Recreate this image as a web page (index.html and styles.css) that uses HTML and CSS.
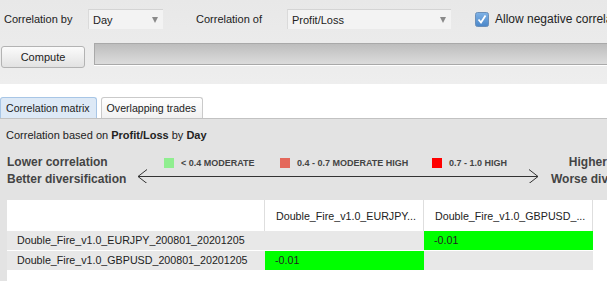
FILE: index.html
```html
<!DOCTYPE html>
<html>

<head>
    <link rel="stylesheet" href="styles.css">
</head>

<body>
    <div class="toolbar">
        <div class="options">
            <label class="opt-label by-label">Correlation by</label>
            <div class="select select-by"><span>Day</span><span class="caret"></span></div>
            <label class="opt-label of-label">Correlation of</label>
            <div class="select select-of"><span>Profit/Loss</span><span class="caret"></span></div>
            <svg class="check" width="14" height="15" viewBox="0 0 14 15">
                <defs>
                    <linearGradient id="chk" x1="0" y1="0" x2="0" y2="1">
                        <stop offset="0" stop-color="#7fb2e6" />
                        <stop offset="1" stop-color="#4a86c8" />
                    </linearGradient>
                </defs>
                <rect x="0.5" y="0.5" width="13" height="14" rx="2" fill="url(#chk)" stroke="#6b8fb8" />
                <path d="M3.5 7.5 L6 10.5 L10.5 3.5" fill="none" stroke="#fff" stroke-width="1.8" />
            </svg>
            <span class="check-label">Allow negative correlation</span>
        </div>
        <div class="actions">
            <button class="compute">Compute</button>
            <div class="progress"></div>
        </div>
    </div>

    <div class="tabs">
        <div class="tab active">Correlation matrix</div>
        <div class="tab">Overlapping trades</div>
    </div>

    <div class="panel">
        <div class="summary">Correlation based on <b>Profit/Loss</b> by <b>Day</b></div>

        <div class="legend">
            <div class="legend-side legend-left">Lower correlation<br>Better diversification</div>
            <div class="legend-mid">
                <div class="legend-keys">
                    <div class="key key-low"><span class="swatch green"></span>&lt; 0.4 MODERATE</div>
                    <div class="key key-mid"><span class="swatch salmon"></span>0.4 - 0.7 MODERATE HIGH</div>
                    <div class="key"><span class="swatch red"></span>0.7 - 1.0 HIGH</div>
                </div>
                <svg class="arrow" width="402" height="14" viewBox="0 0 402 14">
                    <path d="M1 7.5 H401 M10 0.5 L1 7.5 L10 14.5 M392 0.5 L401 7.5 L392 14.5" fill="none"
                        stroke="#333" stroke-width="1" />
                </svg>
            </div>
            <div class="legend-side legend-right">Higher correlation<br>Worse diversification</div>
        </div>

        <div class="matrix">
            <div class="grid">
                <div class="head"></div>
                <div class="head">Double_Fire_v1.0_EURJPY...</div>
                <div class="head">Double_Fire_v1.0_GBPUSD_...</div>

                <div class="cell label">Double_Fire_v1.0_EURJPY_200801_20201205</div>
                <div class="cell"></div>
                <div class="cell hit">-0.01</div>

                <div class="cell label">Double_Fire_v1.0_GBPUSD_200801_20201205</div>
                <div class="cell hit">-0.01</div>
                <div class="cell"></div>
            </div>
        </div>
    </div>
</body>

</html>
```

FILE: styles.css
```css
html,
body {
    margin: 0;
    overflow: hidden;
}

body {
    font-family: "Liberation Sans", Arial, sans-serif;
    font-size: 11px;
    color: #222;
    background: #fff;
    height: 281px;
}

.toolbar {
    height: 84px;
    box-sizing: border-box;
    padding-top: 9px;
    background: linear-gradient(#e8e8e8, #eeeeee);
}

.options {
    display: flex;
    align-items: center;
    height: 20px;
    white-space: nowrap;
}

.opt-label {
    flex: none;
}

.by-label {
    margin-left: 4px;
    width: 84px;
}

.of-label {
    margin-left: 33px;
    width: 91px;
}

.select {
    flex: none;
    box-sizing: border-box;
    height: 20px;
    display: flex;
    align-items: center;
    justify-content: space-between;
    padding: 0 5px 0 4px;
    background: #f3f3f3;
    border-top: 1px solid #d4d4d4;
    border-left: 1px solid #dadada;
}

.select-by {
    width: 75px;
}

.select-of {
    width: 164px;
}

.caret {
    width: 0;
    height: 0;
    border-left: 3px solid transparent;
    border-right: 3px solid transparent;
    border-top: 6px solid #8a8a8a;
}

.check {
    flex: none;
    margin-left: 24px;
}

.check-label {
    margin-left: 6px;
    font-size: 12px;
}

.actions {
    display: flex;
    align-items: flex-start;
    margin-top: 14px;
}

.compute {
    flex: none;
    margin: 3px 0 0 1px;
    width: 84px;
    height: 22px;
    border: 1px solid #b3b3b3;
    border-radius: 3px;
    background: linear-gradient(#fbfbfb, #e2e2e2);
    font-family: "Liberation Sans", Arial, sans-serif;
    font-size: 11px;
    color: #222;
    padding: 0;
}

.progress {
    flex: none;
    margin-left: 9px;
    width: 540px;
    height: 22px;
    box-sizing: border-box;
    border: 1px solid #a9a9a9;
    background: linear-gradient(#bdbdbd, #dcdcdc);
    box-shadow: 0 1px 0 #fff;
}

.tabs {
    display: flex;
    gap: 4px;
    padding-top: 13px;
    border-bottom: 1px solid #c2c2c2;
}

.tab {
    height: 20px;
    line-height: 20px;
    padding: 0 6px 0 5px;
    border: 1px solid #cacaca;
    border-bottom: none;
    border-radius: 3px 3px 0 0;
    background: linear-gradient(#ffffff, #f1f1f1);
    font-size: 10.6px;
    white-space: nowrap;
}

.tab.active {
    background: #dde9f6;
    border-color: #a8c6e6;
}

.panel {
    background: #e3e3e3;
    padding-top: 9px;
    box-sizing: border-box;
    width: 607px;
    height: 162px;
}

.summary {
    padding-left: 6px;
    line-height: 14px;
    color: #222;
}

.legend {
    display: flex;
    margin-top: 12px;
    white-space: nowrap;
    overflow: hidden;
}

.legend-side {
    font-weight: bold;
    font-size: 12px;
    line-height: 17px;
    color: #444;
    flex: none;
}

.legend-left {
    width: 137px;
    box-sizing: border-box;
    padding-left: 7px;
}

.legend-right {
    margin-left: 12px;
    text-align: right;
}

.legend-mid {
    flex: none;
    width: 402px;
}

.legend-keys {
    display: flex;
    align-items: center;
    height: 18px;
    padding-left: 27px;
    font-size: 9px;
    font-weight: bold;
    color: #444;
}

.key {
    display: flex;
    align-items: center;
}

.key-low {
    width: 116px;
}

.key-mid {
    width: 152px;
}

.swatch {
    width: 10px;
    height: 10px;
    margin-right: 7px;
}

.green {
    background: #90ee90;
}

.salmon {
    background: #e4685b;
}

.red {
    background: #ff0000;
}

.arrow {
    display: block;
    margin-top: -3px;
}

.matrix {
    margin: 12px 0 0 7px;
    background: #fff;
    height: 82px;
}

.grid {
    display: grid;
    grid-template-columns: 258px 159px 169px;
    font-size: 10.7px;
}

.head {
    height: 31px;
    box-sizing: border-box;
    border-right: 1px solid #dedede;
    padding-left: 11px;
    display: flex;
    align-items: center;
    white-space: nowrap;
    overflow: hidden;
}

.cell {
    height: 20px;
    box-sizing: border-box;
    border-bottom: 1px solid #fff;
    background: #e8e8e8;
    padding-left: 10px;
    line-height: 19px;
    white-space: nowrap;
}

.hit {
    background: #00ff00;
}
```
